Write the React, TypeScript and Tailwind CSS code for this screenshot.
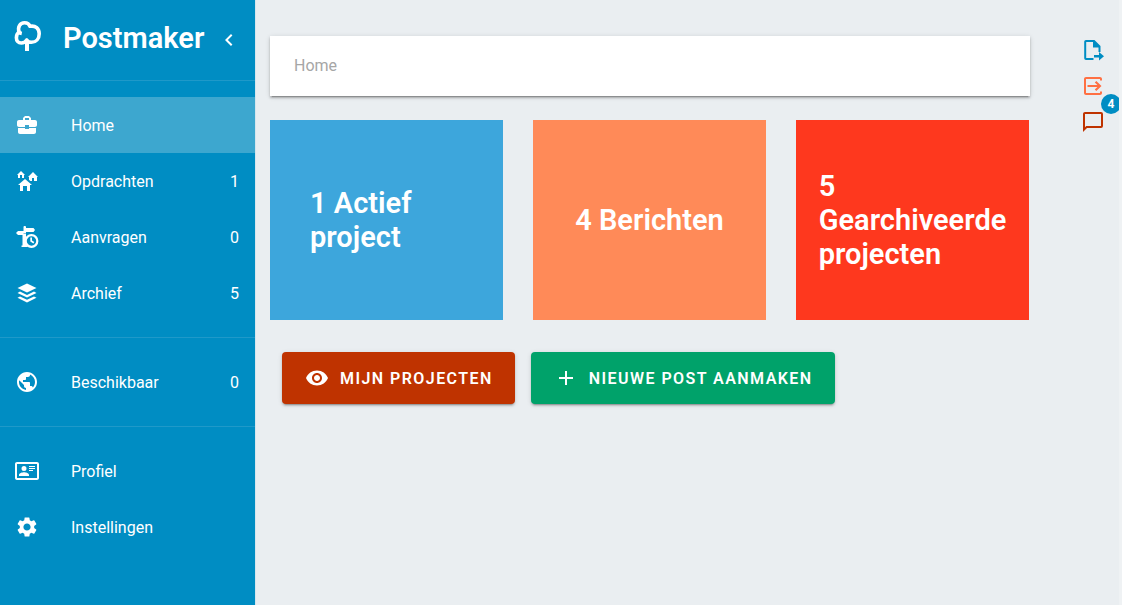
import type { ReactNode } from "react";
import { MdAdd, MdBusinessCenter, MdChevronLeft, MdPublic, MdSettings, MdVisibility } from "react-icons/md";

const svgProps = { viewBox: "0 0 24 24", fill: "currentColor", "aria-hidden": true } as const;

function TreeIcon() {
  return (
    <svg viewBox="0 0 28 32" className="h-8 w-7" fill="none" stroke="currentColor" aria-hidden="true">
      <path
        d="M5.200 12.200C3.300 7 6 2.800 10.500 2.800C13.500 2.800 15.300 4.300 16 6.300C21.500 5.200 25.200 8.600 25.200 13.700C25.200 18.800 22 22.300 17.500 22.300C15 22.300 13.500 21.500 12.800 20C11.500 22 9.500 23 7.300 23C4.300 23 2.400 20.800 2.400 17.700C2.400 14.800 3.500 13 5.500 12.200C6 13 6.800 13.400 7.800 13.600"
        strokeWidth="3.600"
        strokeLinejoin="round"
      />
      <path d="M12.800 18L15 22V31H11V22Z" fill="currentColor" stroke="none" />
    </svg>
  );
}

function HomesIcon() {
  return (
    <svg {...svgProps} className="size-6">
      <path d="M17 16H15V22H12V17H8V22H5V16H3L10 10L17 16M6 2L10 6H9V9H7V6H5V9H3V6H2L6 2M18 3L23 8H22V12H19V9H17V12H15.340L14 10.870V8H13L18 3Z" />
    </svg>
  );
}

function SignClockIcon() {
  return (
    <svg {...svgProps} className="size-6">
      <path d="M8.500 2C8.500 0.700 11 0.700 11 2V3H18.500L20 5L18.500 7H11V8.500H8.500V10H3L1 8L3 6H8.500Z" />
      <path d="M7.500 9H11V13L10 16L11 19L13 22H6.500V20.500H7.500Z" />
      <circle cx="16.500" cy="16" r="5.800" fill="none" stroke="currentColor" strokeWidth="2.200" />
      <path d="M15.300 12.500H17V15.600L19.300 17.100L18.400 18.600L15.300 16.500Z" />
    </svg>
  );
}

function StackIcon() {
  return (
    <svg {...svgProps} className="size-6">
      <path d="M12 2.500L21.500 7L12 11.500L2.500 7Z" />
      <path d="M5 10.600L12 13.900L19 10.600L21.500 11.900L12 16.500L2.500 11.900Z" />
      <path d="M5 15.500L12 18.800L19 15.500L21.500 16.800L12 21.400L2.500 16.800Z" />
    </svg>
  );
}

function CardIcon() {
  return (
    <svg {...svgProps} className="size-6">
      <path d="M22,3H2C0.910,3.040 0.040,3.910 0,5V19C0.040,20.090 0.910,20.960 2,21H22C23.090,20.960 23.960,20.090 24,19V5C23.960,3.910 23.090,3.040 22,3M22,19H2V5H22V19M14,17V15.750C14,14.090 10.660,13.250 9,13.250C7.340,13.250 4,14.090 4,15.750V17H14M9,7A2.500,2.500 0 0,0 6.500,9.500A2.500,2.500 0 0,0 9,12A2.500,2.500 0 0,0 11.500,9.500A2.500,2.500 0 0,0 9,7M14,7V8H20V7H14M14,9V10H20V9H14M14,11V12H18V11H14" />
    </svg>
  );
}

function FileMoveIcon() {
  return (
    <svg {...svgProps} className="size-6">
      <path d="M13.500 2H5C3.900 2 3.200 2.900 3.200 4V20C3.200 21.100 3.900 22 5 22H12.500V20H5.200V4H12V9.500H17.500V14H19.500V8L13.500 2Z" />
      <path d="M13 17H18V14L23 18.300L18 22.500V19.500H13Z" />
    </svg>
  );
}

function ExitIcon() {
  return (
    <svg {...svgProps} className="size-6">
      <path d="M21 6.500V5C21 3.900 20.100 3 19 3H5C3.900 3 3 3.900 3 5V19C3 20.100 3.900 21 5 21H19C20.100 21 21 20.100 21 19V17.500H19V19H5V5H19V6.500Z" />
      <path d="M13.800 8.400L15.300 6.900L20.500 12L15.300 17.100L13.800 15.600L16.400 13H6.500V11H16.400Z" />
    </svg>
  );
}

function MessageIcon() {
  return (
    <svg {...svgProps} className="size-6">
      <path d="M20,2A2,2 0 0,1 22,4V16A2,2 0 0,1 20,18H6L2,22V4C2,2.890 2.900,2 4,2H20M4,4V17.170L5.170,16H20V4H4Z" />
    </svg>
  );
}

type Item = { label: string; icon: ReactNode; count?: number; active?: boolean };

const groups: Item[][] = [
  [
    { label: "Home", icon: <MdBusinessCenter className="size-6" />, active: true },
    { label: "Opdrachten", icon: <HomesIcon />, count: 1 },
    { label: "Aanvragen", icon: <SignClockIcon />, count: 0 },
    { label: "Archief", icon: <StackIcon />, count: 5 },
  ],
  [{ label: "Beschikbaar", icon: <MdPublic className="size-6" />, count: 0 }],
  [
    { label: "Profiel", icon: <CardIcon /> },
    { label: "Instellingen", icon: <MdSettings className="size-6" /> },
  ],
];

const cards = [
  { text: "1 Actief project", color: "bg-[#3da6dc]" },
  { text: "4 Berichten", color: "bg-[#ff8a58]" },
  { text: "5 Gearchiveerde projecten", color: "bg-[#fe381e]" },
];

function Sidebar() {
  return (
    <aside className="w-64 shrink-0 border-r border-[#d5e6ee] bg-[#008dc3] text-white">
      <header className="flex h-20 items-center pr-[14px] pl-[14px]">
        <span className="pb-2">
          <TreeIcon />
        </span>
        <h1 className="ml-[21px] pb-1 text-[29px] leading-10 font-semibold">Postmaker</h1>
        <button type="button" aria-label="Menu inklappen" className="ml-auto">
          <MdChevronLeft className="size-6" />
        </button>
      </header>
      <nav>
        {groups.map((items, index) => (
          <ul key={index} className="border-t border-[#1f99c9] py-4">
            {items.map((item) => (
              <li key={item.label}>
                <a
                  href="#"
                  aria-current={item.active ? "page" : undefined}
                  className={`flex h-14 items-center px-4 ${item.active ? "bg-[#3da7cf]" : ""}`}
                >
                  <span className="flex w-[22px] justify-center *:shrink-0">{item.icon}</span>
                  <span className="ml-[33px] flex-1 pt-0.5">{item.label}</span>
                  {item.count !== undefined && <span className="pt-0.5">{item.count}</span>}
                </a>
              </li>
            ))}
          </ul>
        ))}
      </nav>
    </aside>
  );
}

const actionClass =
  "flex h-[52px] items-center gap-[11px] rounded pr-[22px] pl-[23px] font-semibold uppercase tracking-[0.09em] text-white shadow-[0_3px_1px_-2px_rgba(0,0,0,0.2),0_2px_2px_0_rgba(0,0,0,0.14),0_1px_5px_0_rgba(0,0,0,0.12)]";

export default function App() {
  return (
    <div className="flex min-h-screen bg-[#eaeef1] font-[Roboto,sans-serif] text-base leading-6">
      <Sidebar />
      <main className="min-w-0 flex-1 pt-9 pl-[14px]">
        <nav
          aria-label="Kruimelpad"
          className="flex h-[60px] items-center bg-white px-6 text-[#a6a6a6] shadow-[0_3px_1px_-2px_rgba(0,0,0,0.2),0_2px_2px_0_rgba(0,0,0,0.2),0_1px_5px_0_rgba(0,0,0,0.14)]"
        >
          <span>Home</span>
        </nav>
        <div className="mt-6 mr-px grid grid-cols-3 gap-[30px]">
          {cards.map((card) => (
            <a
              key={card.text}
              href="#"
              className={`flex h-[200px] items-center justify-center px-10 text-[29px] leading-[34px] font-semibold text-white ${card.color}`}
            >
              <span>{card.text}</span>
            </a>
          ))}
        </div>
        <div className="mt-8 flex gap-4 pl-3">
          <button type="button" className={`${actionClass} bg-[#bf3300]`}>
            <MdVisibility className="size-6" />
            <span className="pt-0.5">Mijn projecten</span>
          </button>
          <button type="button" className={`${actionClass} bg-[#00a26a]`}>
            <MdAdd className="size-6" />
            <span className="pt-0.5">Nieuwe post aanmaken</span>
          </button>
        </div>
      </main>
      <aside className="flex w-[92px] shrink-0 flex-col items-end gap-3 overflow-x-clip border-r-[3px] border-[#eff2f4] pt-[38px] pr-[14px]">
        <button type="button" aria-label="Exporteren" className="text-[#008dc3]">
          <FileMoveIcon />
        </button>
        <button type="button" aria-label="Uitloggen" className="text-[#ff7043]">
          <ExitIcon />
        </button>
        <button type="button" aria-label="Berichten" className="relative text-[#bf3300]">
          <MessageIcon />
          <span className="absolute -top-4 -right-4 flex size-5 items-center justify-center rounded-full bg-[#008dc3] text-xs font-bold text-white">
            4
          </span>
        </button>
      </aside>
    </div>
  );
}
